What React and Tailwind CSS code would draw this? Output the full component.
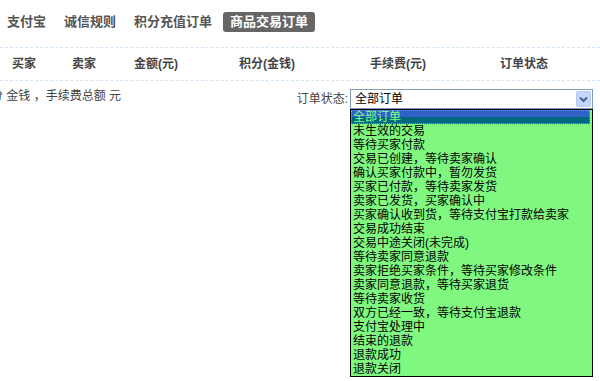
const tabs = ["支付宝", "诚信规则", "积分充值订单", "商品交易订单"];

const columns = [
  { label: "买家", width: "w-[60px]" },
  { label: "卖家", width: "w-[62px]" },
  { label: "金额(元)", width: "w-[105px]" },
  { label: "积分(金钱)", width: "w-[131px]" },
  { label: "手续费(元)", width: "w-[130px]" },
  { label: "订单状态", width: "w-[60px]" },
];

const statuses = [
  "全部订单",
  "未生效的交易",
  "等待买家付款",
  "交易已创建，等待卖家确认",
  "确认买家付款中，暂勿发货",
  "买家已付款，等待卖家发货",
  "卖家已发货，买家确认中",
  "买家确认收到货，等待支付宝打款给卖家",
  "交易成功结束",
  "交易中途关闭(未完成)",
  "等待卖家同意退款",
  "卖家拒绝买家条件，等待买家修改条件",
  "卖家同意退款，等待买家退货",
  "等待卖家收货",
  "双方已经一致，等待支付宝退款",
  "支付宝处理中",
  "结束的退款",
  "退款成功",
  "退款关闭",
];

const App = () => {
  return (
    <div className="w-[600px] h-[381px] overflow-hidden bg-white font-['Liberation_Sans','Noto_Sans_CJK_SC',sans-serif] text-[12px] text-[#333]">
      <div className="flex items-center gap-[4px] pt-[12px]">
        {tabs.map((tab, i) => (
          <div
            key={tab}
            className={
              i === tabs.length - 1
                ? "h-[20px] leading-[20px] px-[7px] rounded-[3px] bg-[#666] text-white font-bold text-[13px]"
                : "h-[20px] leading-[20px] px-[7px] text-[#555] font-bold text-[13px]"
            }
          >
            {tab}
          </div>
        ))}
      </div>

      <div className="mt-[15px] border-t border-b border-dashed border-[#d3e6f5] h-[34px] flex items-center pl-[12px]">
        {columns.map((col) => (
          <div key={col.label} className={`${col.width} shrink-0 font-bold text-[#444]`}>
            {col.label}
          </div>
        ))}
      </div>

      <div className="flex items-start pr-[7px]">
        <div className="mt-[6px] -ml-[9px] whitespace-nowrap text-[#444]">
          分 金钱 ，手续费总额 元
        </div>

        <div className="ml-auto mt-[8px] flex items-center">
          <span className="text-[#444] mr-[2px]">订单状态:</span>
          <div className="relative w-[243px]">
            <div className="h-[20px] border border-[#7f9db9] bg-white flex items-center">
              <span className="flex-1 pl-[4px] text-black">全部订单</span>
              <span className="w-[15px] h-[16px] mr-[1px] rounded-[2px] border border-[#b6c9f4] bg-[#c5d6fc] flex items-center justify-center">
                <svg width="9" height="7" viewBox="0 0 9 7">
                  <path d="M1 1.5 L4.5 5 L8 1.5" fill="none" stroke="#4d6185" strokeWidth="2" />
                </svg>
              </span>
            </div>

            <ul className="absolute left-0 top-full w-[243px] border border-black bg-[#80f880] pr-[2px] shadow-none">
              {statuses.map((s, i) => (
                <li
                  key={s}
                  className={
                    i === 0
                      ? "h-[14px] leading-[14px] pl-[2px] text-[#80ff80] bg-[linear-gradient(#2e62c6_50%,#00687e_50%)] outline-1 outline-dotted outline-[#d09030] -outline-offset-1 whitespace-nowrap"
                      : "h-[14px] leading-[14px] pl-[2px] text-black whitespace-nowrap"
                  }
                >
                  {s}
                </li>
              ))}
            </ul>
          </div>
        </div>
      </div>
    </div>
  );
};

export default App;
